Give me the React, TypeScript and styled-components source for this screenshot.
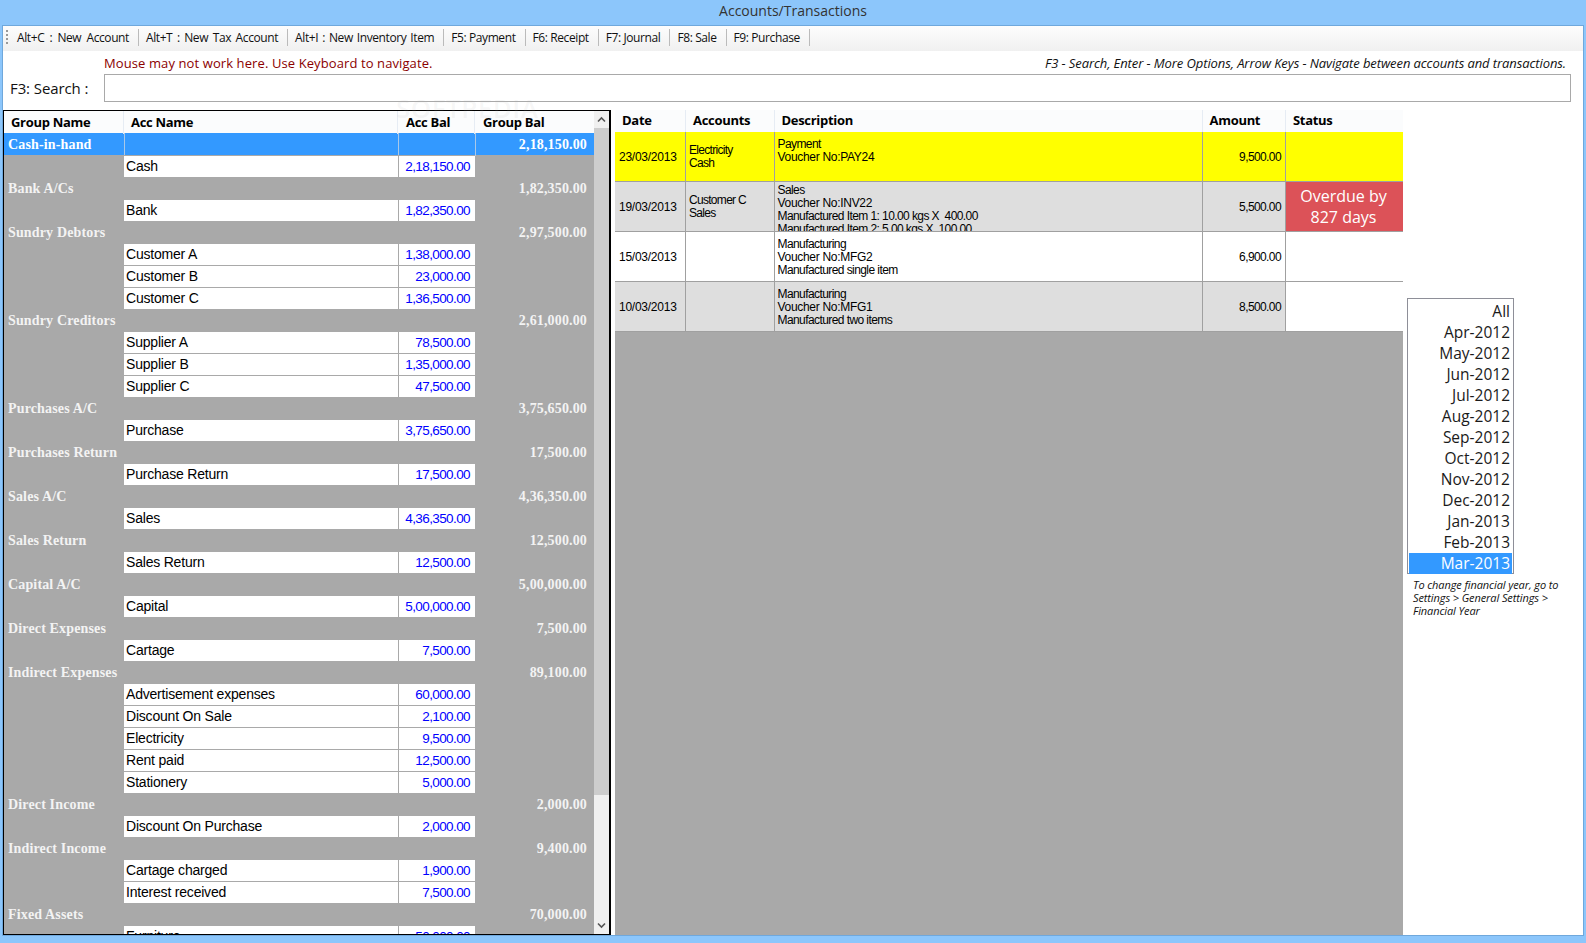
import React from "react";
import styled, { createGlobalStyle } from "styled-components";

const GlobalStyle = createGlobalStyle`
  html, body {
    margin: 0;
    padding: 0;
    background: #8cc6fb;
    overflow: hidden;
  }
  * { box-sizing: border-box; }
`;

const Screen = styled.div`
  width: 1586px;
  height: 943px;
  position: relative;
  display: flex;
  flex-direction: column;
  background: #8cc6fb;
  font-family: "Liberation Sans", Arial, sans-serif;
`;

const TitleBar = styled.div`
  height: 25px;
  flex: none;
  text-align: center;
  font-family: "Open Sans", sans-serif;
  font-size: 14px;
  line-height: 22px;
  color: #333;
`;

const Client = styled.div`
  height: 911px;
  flex: none;
  margin: 0 2px;
  border: 1px solid #6fa8dc;
  background: #fff;
  display: flex;
  flex-direction: column;
  overflow: hidden;
`;

const Toolbar = styled.div`
  height: 25px;
  flex: none;
  display: flex;
  align-items: center;
  padding: 0 0 2px 3px;
  background: linear-gradient(#fdfdfd, #f0f0f0);
  font-family: "Open Sans", sans-serif;
  font-size: 12px;
  letter-spacing: -0.4px;
  color: #111;
`;

const Grip = styled.span`
  width: 2px;
  height: 16px;
  margin-right: 9px;
  background: repeating-linear-gradient(#999 0 2px, transparent 2px 4px);
`;

const ToolButton = styled.span<{ $words: number }>`
  padding-right: 9px;
  margin-right: 7px;
  height: 17px;
  line-height: 17px;
  border-right: 1px solid #bbb;
  word-spacing: ${(p) => p.$words}px;
  white-space: nowrap;
`;

const InfoRow = styled.div`
  height: 23px;
  flex: none;
  display: flex;
  justify-content: space-between;
  align-items: center;
  padding: 0 17px 0 101px;
`;

const Warning = styled.span`
  font-family: "Open Sans", sans-serif;
  font-size: 13px;
  font-weight: 500;
  letter-spacing: 0.1px;
  color: #8b0000;
`;

const Hint = styled.span`
  font-family: "Open Sans", sans-serif;
  font-size: 13px;
  font-style: italic;
  letter-spacing: -0.09px;
  color: #111;
`;

const SearchRow = styled.div`
  height: 28px;
  flex: none;
  display: flex;
  align-items: center;
  padding: 0 12px 0 7px;
`;

const SearchLabel = styled.label`
  width: 94px;
  flex: none;
  font-family: "Open Sans", sans-serif;
  font-size: 15px;
  letter-spacing: -0.1px;
  color: #111;
`;

const SearchInput = styled.input`
  flex: 1;
  height: 28px;
  border: 1px solid #a9a9a9;
  outline: none;
  background: #fff;
`;

const Main = styled.div`
  margin-top: 8px;
  flex: 1;
  min-height: 0;
  display: flex;
`;

const AccountsPanel = styled.div`
  width: 608px;
  flex: none;
  display: flex;
  border: 1px solid #000;
  border-right-width: 2px;
  background: #a9a9a9;
  overflow: hidden;
`;

const AccountsGrid = styled.div`
  flex: 1;
  min-width: 0;
  overflow: hidden;
`;

const accountColumns = "120px 274px 77px 1fr";

const AccountsHead = styled.div`
  height: 22px;
  display: grid;
  grid-template-columns: ${accountColumns};
  background: #fbfcfd;
`;

const HeadCell = styled.div<{ $pad?: number }>`
  padding-left: ${(p) => p.$pad ?? 7}px;
  border-right: 1px solid #e6ecf4;
  font-family: "Open Sans", sans-serif;
  font-weight: 700;
  font-size: 13px;
  letter-spacing: -0.3px;
  line-height: 23px;
  color: #000;
  white-space: nowrap;
  &:last-child { border-right: none; }
`;

const TransHeadCell = styled(HeadCell)`
  line-height: 21px;
`;

const GroupRow = styled.div<{ $selected?: boolean }>`
  height: 22px;
  display: grid;
  grid-template-columns: ${accountColumns};
  align-items: stretch;
  background: ${(p) => (p.$selected ? "#3399ff" : "#a9a9a9")};
  font-family: "Liberation Serif", "Times New Roman", serif;
  font-weight: 700;
  font-size: 14px;
  letter-spacing: 0.15px;
  line-height: 23px;
  color: ${(p) => (p.$selected ? "#fff" : "#f3f3f3")};
`;

const GroupName = styled.div`
  padding-left: 4px;
  white-space: nowrap;
`;

const GroupLine = styled.div<{ $selected?: boolean }>`
  border-left: 1px solid ${(p) => (p.$selected ? "#a9c8e8" : "transparent")};
`;

const GroupBal = styled(GroupLine)`
  text-align: right;
  padding-right: 7px;
`;

const AccRow = styled.div`
  height: 22px;
  display: grid;
  grid-template-columns: ${accountColumns};
  font-size: 14px;
  line-height: 21px;
  letter-spacing: -0.2px;
`;

const AccName = styled.div`
  grid-column: 2;
  background: #fff;
  color: #000;
  padding-left: 2px;
  border-top: 1px solid #a9a9a9;
  white-space: nowrap;
`;

const AccBal = styled.div`
  background: #fff;
  color: #0000ff;
  text-align: right;
  padding-right: 5px;
  border-left: 1px solid #a9a9a9;
  border-top: 1px solid #a9a9a9;
  font-size: 13.5px;
  letter-spacing: -0.6px;
`;

const ScrollBar = styled.div`
  width: 15px;
  flex: none;
  display: flex;
  flex-direction: column;
  background: #f0f0f0;
`;

const ScrollArrow = styled.div`
  height: 17px;
  flex: none;
  display: flex;
  align-items: center;
  justify-content: center;
`;

const ScrollThumb = styled.div`
  height: 667px;
  flex: none;
  background: #cdcdcd;
`;

const ScrollTrack = styled.div`
  flex: 1;
`;

const TransArea = styled.div`
  width: 788px;
  flex: none;
  margin-left: 4px;
  display: flex;
  flex-direction: column;
  background: #a9a9a9;
`;

const transColumns = "71px 88.5px 428px 83.5px 117px";

const TransHead = styled.div`
  height: 22px;
  flex: none;
  display: grid;
  grid-template-columns: ${transColumns};
  background: #fbfcfd;
`;

const TransRow = styled.div<{ $bg: string }>`
  height: 50px;
  flex: none;
  display: grid;
  grid-template-columns: ${transColumns};
  background: ${(p) => p.$bg};
  border-bottom: 1px solid #a0a0a0;
  font-size: 12px;
  line-height: 13px;
  color: #000;
`;

const TransCell = styled.div`
  border-right: 1px solid #a0a0a0;
  padding: 0 3px;
  display: flex;
  align-items: center;
  overflow: hidden;
`;

const DateCell = styled(TransCell)`
  padding: 2px 0 0 4px;
  letter-spacing: -0.25px;
`;

const AccountsCell = styled(TransCell)`
  letter-spacing: -0.7px;
`;

const AmountCell = styled(TransCell)`
  justify-content: flex-end;
  padding: 2px 4px 0 0;
  letter-spacing: -0.6px;
`;

const DescCell = styled(TransCell)<{ $top: number }>`
  display: block;
  padding: ${(p) => p.$top}px 3px 0;
  white-space: pre;
`;

const DescLine = styled.div<{ $voucher: boolean }>`
  letter-spacing: ${(p) => (p.$voucher ? -0.3 : -0.58)}px;
`;

const StatusCell = styled.div<{ $bg: string }>`
  padding-right: 2px;
  background: ${(p) => p.$bg};
  color: #fff;
  display: flex;
  align-items: center;
  justify-content: center;
  text-align: center;
  font-family: "Open Sans", sans-serif;
  font-size: 16px;
  line-height: 21px;
`;

const SidePanel = styled.div`
  flex: 1;
  min-width: 0;
  padding: 188px 0 0 4px;
`;

const MonthList = styled.div`
  width: 107px;
  height: 276px;
  border: 1px solid #8e8f98;
  padding: 2px 1px 0;
  font-family: "Open Sans", sans-serif;
  font-size: 15.5px;
  color: #1a1a1a;
`;

const MonthItem = styled.div<{ $selected?: boolean }>`
  height: 21px;
  line-height: 21px;
  text-align: right;
  padding-right: 2px;
  background: ${(p) => (p.$selected ? "#3399ff" : "transparent")};
  color: ${(p) => (p.$selected ? "#fff" : "inherit")};
`;

const YearNote = styled.p`
  margin: 4px 0 0 6px;
  width: 160px;
  font-family: "Open Sans", sans-serif;
  font-style: italic;
  font-size: 11px;
  letter-spacing: -0.1px;
  line-height: 13px;
  color: #111;
`;

const Watermark = styled.div`
  position: absolute;
  left: 396px;
  top: 95px;
  font-family: "Open Sans", sans-serif;
  font-weight: 600;
  font-size: 26px;
  line-height: 26px;
  letter-spacing: 0.5px;
  color: rgba(170, 170, 170, 0.1);
  pointer-events: none;
`;

type Account = { name: string; bal: string };
type Group = { name: string; bal: string; accounts: Account[] };

const groups: Group[] = [
  { name: "Cash-in-hand", bal: "2,18,150.00", accounts: [{ name: "Cash", bal: "2,18,150.00" }] },
  { name: "Bank A/Cs", bal: "1,82,350.00", accounts: [{ name: "Bank", bal: "1,82,350.00" }] },
  {
    name: "Sundry Debtors",
    bal: "2,97,500.00",
    accounts: [
      { name: "Customer A", bal: "1,38,000.00" },
      { name: "Customer B", bal: "23,000.00" },
      { name: "Customer C", bal: "1,36,500.00" },
    ],
  },
  {
    name: "Sundry Creditors",
    bal: "2,61,000.00",
    accounts: [
      { name: "Supplier A", bal: "78,500.00" },
      { name: "Supplier B", bal: "1,35,000.00" },
      { name: "Supplier C", bal: "47,500.00" },
    ],
  },
  { name: "Purchases A/C", bal: "3,75,650.00", accounts: [{ name: "Purchase", bal: "3,75,650.00" }] },
  { name: "Purchases Return", bal: "17,500.00", accounts: [{ name: "Purchase Return", bal: "17,500.00" }] },
  { name: "Sales A/C", bal: "4,36,350.00", accounts: [{ name: "Sales", bal: "4,36,350.00" }] },
  { name: "Sales Return", bal: "12,500.00", accounts: [{ name: "Sales Return", bal: "12,500.00" }] },
  { name: "Capital A/C", bal: "5,00,000.00", accounts: [{ name: "Capital", bal: "5,00,000.00" }] },
  { name: "Direct Expenses", bal: "7,500.00", accounts: [{ name: "Cartage", bal: "7,500.00" }] },
  {
    name: "Indirect Expenses",
    bal: "89,100.00",
    accounts: [
      { name: "Advertisement expenses", bal: "60,000.00" },
      { name: "Discount On Sale", bal: "2,100.00" },
      { name: "Electricity", bal: "9,500.00" },
      { name: "Rent paid", bal: "12,500.00" },
      { name: "Stationery", bal: "5,000.00" },
    ],
  },
  { name: "Direct Income", bal: "2,000.00", accounts: [{ name: "Discount On Purchase", bal: "2,000.00" }] },
  {
    name: "Indirect Income",
    bal: "9,400.00",
    accounts: [
      { name: "Cartage charged", bal: "1,900.00" },
      { name: "Interest received", bal: "7,500.00" },
    ],
  },
  { name: "Fixed Assets", bal: "70,000.00", accounts: [{ name: "Furniture", bal: "50,000.00" }] },
];

const transactions = [
  {
    date: "23/03/2013",
    accounts: ["Electricity", "Cash"],
    desc: ["Payment", "Voucher No:PAY24"],
    amount: "9,500.00",
    bg: "#ffff00",
    statusBg: "#ffff00",
    top: 6,
  },
  {
    date: "19/03/2013",
    accounts: ["Customer C", "Sales"],
    desc: ["Sales", "Voucher No:INV22", "Manufactured Item 1: 10.00 kgs X  400.00", "Manufactured Item 2: 5.00 kgs X  100.00"],
    amount: "5,500.00",
    bg: "#dedede",
    statusBg: "#dc5258",
    status: ["Overdue by", "827 days"],
    top: 2,
  },
  {
    date: "15/03/2013",
    accounts: [],
    desc: ["Manufacturing", "Voucher No:MFG2", "Manufactured single item"],
    amount: "6,900.00",
    bg: "#ffffff",
    statusBg: "#ffffff",
    top: 6,
  },
  {
    date: "10/03/2013",
    accounts: [],
    desc: ["Manufacturing", "Voucher No:MFG1", "Manufactured two items"],
    amount: "8,500.00",
    bg: "#dedede",
    statusBg: "#ffffff",
    top: 6,
  },
];

const months = [
  "All", "Apr-2012", "May-2012", "Jun-2012", "Jul-2012", "Aug-2012", "Sep-2012",
  "Oct-2012", "Nov-2012", "Dec-2012", "Jan-2013", "Feb-2013", "Mar-2013",
];

const shortcuts = [
  { label: "Alt+C : New Account", words: 2.45 },
  { label: "Alt+T : New Tax Account", words: 1.86 },
  { label: "Alt+I : New Inventory Item", words: 1.25 },
  { label: "F5: Payment", words: 0 },
  { label: "F6: Receipt", words: 0 },
  { label: "F7: Journal", words: 0 },
  { label: "F8: Sale", words: 0 },
  { label: "F9: Purchase", words: 0 },
];

function Chevron({ up }: { up?: boolean }) {
  return (
    <svg width="9" height="7" viewBox="0 0 9 7">
      <path
        d={up ? "M1 5.5 L4.5 2 L8 5.5" : "M1 1.5 L4.5 5 L8 1.5"}
        fill="none"
        stroke="#555"
        strokeWidth="1.6"
      />
    </svg>
  );
}

function App() {
  return (
    <Screen>
      <GlobalStyle />
      <TitleBar>Accounts/Transactions</TitleBar>
      <Client>
        <Toolbar>
          <Grip />
          {shortcuts.map((s) => (
            <ToolButton key={s.label} $words={s.words}>
              {s.label}
            </ToolButton>
          ))}
        </Toolbar>
        <InfoRow>
          <Warning>Mouse may not work here. Use Keyboard to navigate.</Warning>
          <Hint>F3 - Search, Enter - More Options, Arrow Keys - Navigate between accounts and transactions.</Hint>
        </InfoRow>
        <SearchRow>
          <SearchLabel>F3: Search :</SearchLabel>
          <SearchInput />
        </SearchRow>
        <Main>
          <AccountsPanel>
            <AccountsGrid>
              <AccountsHead>
                <HeadCell>Group Name</HeadCell>
                <HeadCell>Acc Name</HeadCell>
                <HeadCell $pad={8}>Acc Bal</HeadCell>
                <HeadCell $pad={8}>Group Bal</HeadCell>
              </AccountsHead>
              {groups.map((g, i) => (
                <React.Fragment key={g.name}>
                  <GroupRow $selected={i === 0}>
                    <GroupName>{g.name}</GroupName>
                    <GroupLine $selected={i === 0} />
                    <GroupLine $selected={i === 0} />
                    <GroupBal $selected={i === 0}>{g.bal}</GroupBal>
                  </GroupRow>
                  {g.accounts.map((a) => (
                    <AccRow key={a.name}>
                      <AccName>{a.name}</AccName>
                      <AccBal>{a.bal}</AccBal>
                    </AccRow>
                  ))}
                </React.Fragment>
              ))}
            </AccountsGrid>
            <ScrollBar>
              <ScrollArrow>
                <Chevron up />
              </ScrollArrow>
              <ScrollThumb />
              <ScrollTrack />
              <ScrollArrow>
                <Chevron />
              </ScrollArrow>
            </ScrollBar>
          </AccountsPanel>
          <TransArea>
            <TransHead>
              <TransHeadCell>Date</TransHeadCell>
              <TransHeadCell>Accounts</TransHeadCell>
              <TransHeadCell>Description</TransHeadCell>
              <TransHeadCell>Amount</TransHeadCell>
              <TransHeadCell>Status</TransHeadCell>
            </TransHead>
            {transactions.map((t) => (
              <TransRow key={t.date} $bg={t.bg}>
                <DateCell>{t.date}</DateCell>
                <AccountsCell>
                  <div>
                    {t.accounts.map((a) => (
                      <div key={a}>{a}</div>
                    ))}
                  </div>
                </AccountsCell>
                <DescCell $top={t.top}>
                  {t.desc.map((d) => (
                    <DescLine key={d} $voucher={d.startsWith("Voucher")}>
                      {d}
                    </DescLine>
                  ))}
                </DescCell>
                <AmountCell>{t.amount}</AmountCell>
                <StatusCell $bg={t.statusBg}>
                  {t.status && (
                    <div>
                      {t.status.map((s) => (
                        <div key={s}>{s}</div>
                      ))}
                    </div>
                  )}
                </StatusCell>
              </TransRow>
            ))}
          </TransArea>
          <SidePanel>
            <MonthList>
              {months.map((m) => (
                <MonthItem key={m} $selected={m === "Mar-2013"}>
                  {m}
                </MonthItem>
              ))}
            </MonthList>
            <YearNote>To change financial year, go to Settings &gt; General Settings &gt; Financial Year</YearNote>
          </SidePanel>
        </Main>
      </Client>
      <Watermark>SOFTPEDIA</Watermark>
    </Screen>
  );
}

export default App;
